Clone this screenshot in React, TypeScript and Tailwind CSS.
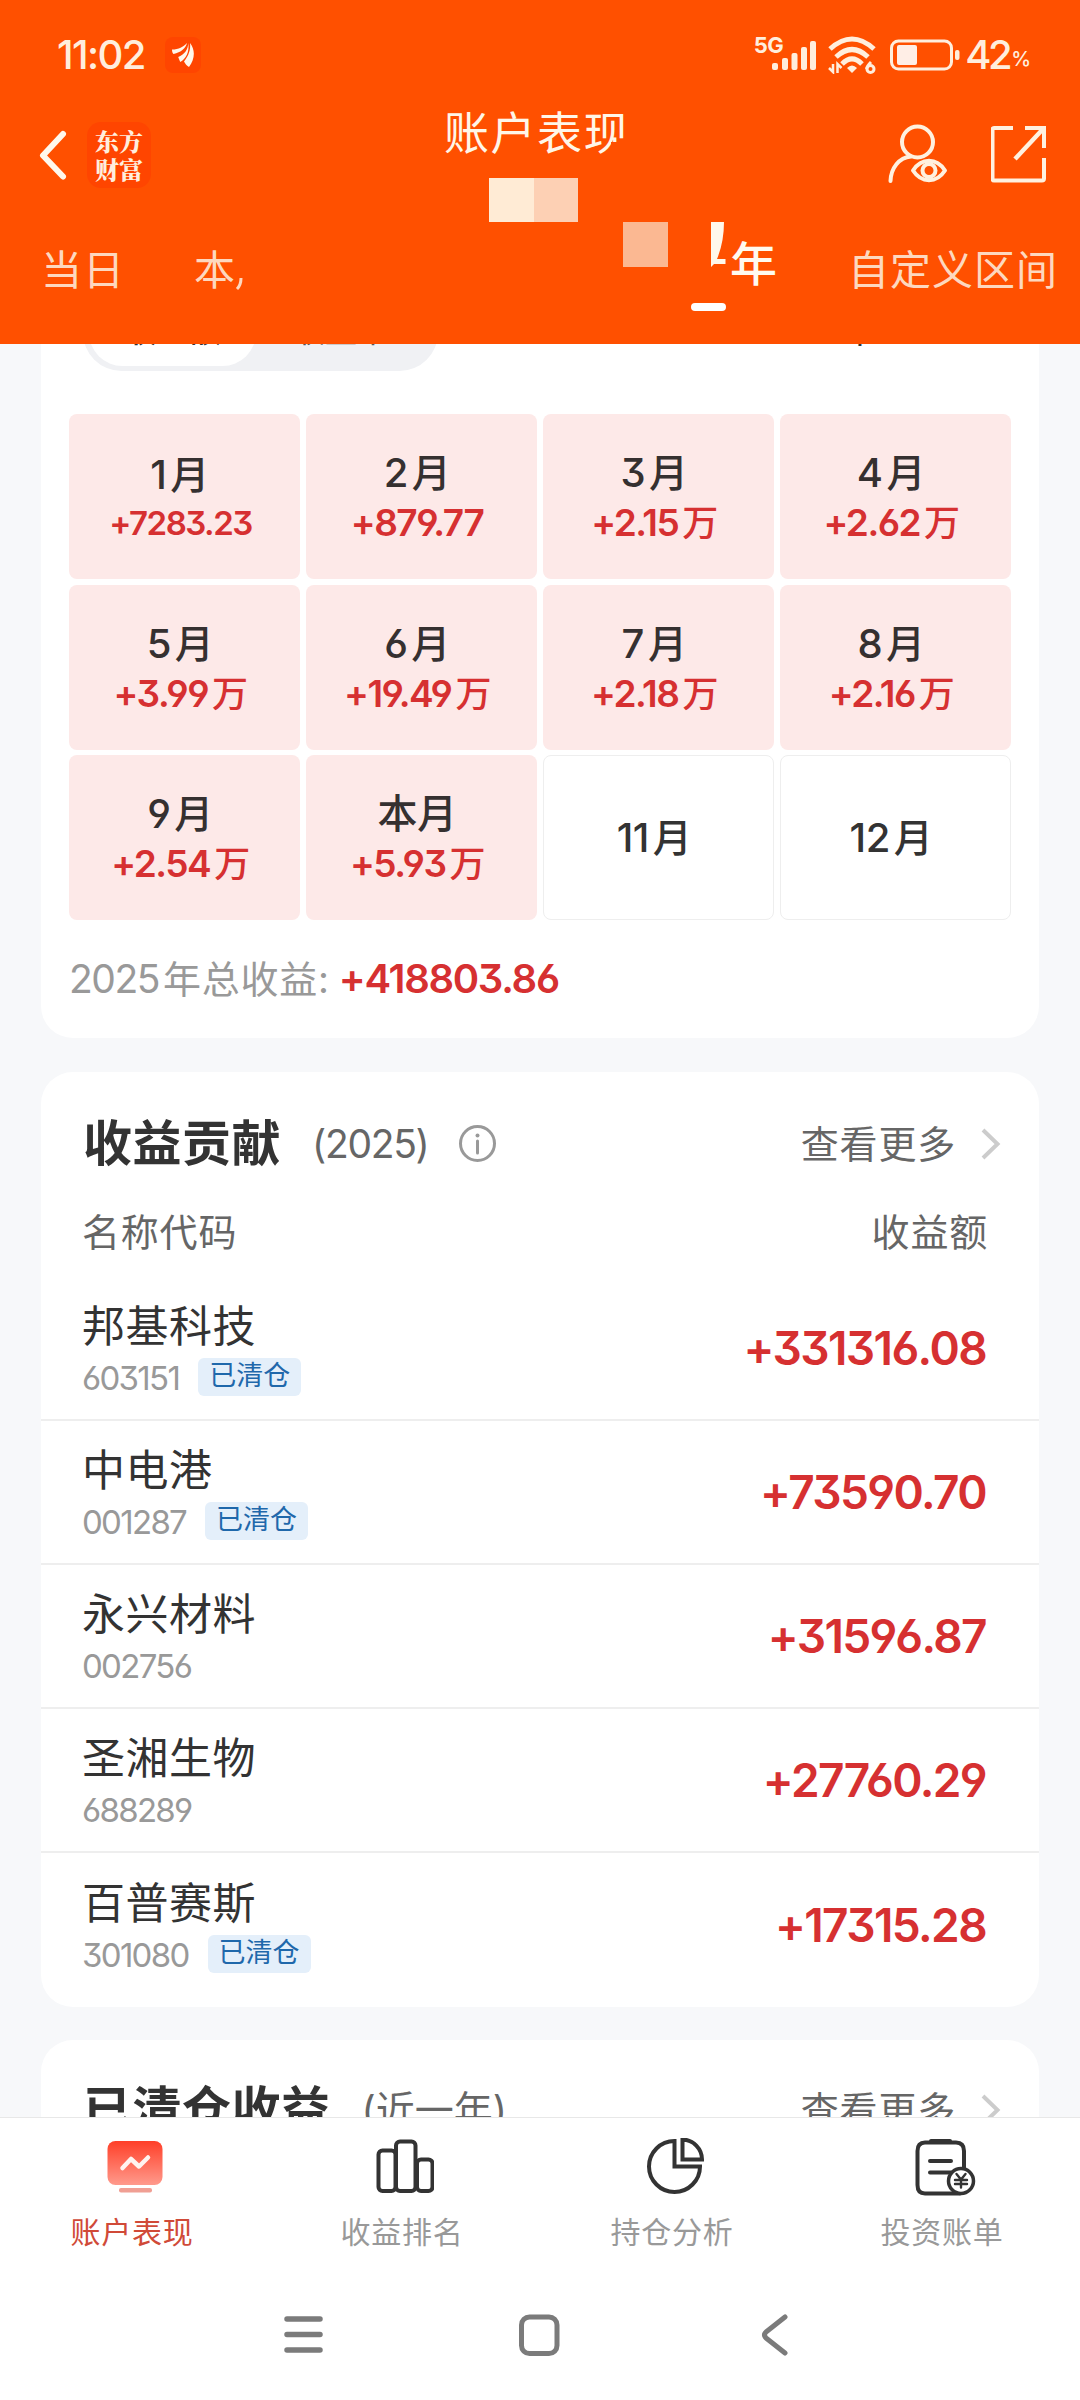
import React from "react";

type Month = { num: string; amount?: string; unit?: string; small?: boolean };

const months: Month[] = [
  { num: "1", amount: "+7283.23", small: true },
  { num: "2", amount: "+879.77" },
  { num: "3", amount: "+2.15", unit: "万" },
  { num: "4", amount: "+2.62", unit: "万" },
  { num: "5", amount: "+3.99", unit: "万" },
  { num: "6", amount: "+19.49", unit: "万" },
  { num: "7", amount: "+2.18", unit: "万" },
  { num: "8", amount: "+2.16", unit: "万" },
  { num: "9", amount: "+2.54", unit: "万" },
  { num: "本", amount: "+5.93", unit: "万" },
  { num: "11" },
  { num: "12" },
];

const stocks = [
  { name: "邦基科技", code: "603151", cleared: true, amount: "+331316.08" },
  { name: "中电港", code: "001287", cleared: true, amount: "+73590.70" },
  { name: "永兴材料", code: "002756", cleared: false, amount: "+31596.87" },
  { name: "圣湘生物", code: "688289", cleared: false, amount: "+27760.29" },
  { name: "百普赛斯", code: "301080", cleared: true, amount: "+17315.28" },
];

function StatusBar() {
  return (
    <div className="flex h-[109px] items-center pl-[57px] pr-[50px] text-[#ffeedd]">
      <span className="text-[40px] font-medium leading-[40px] tracking-[-1.6px]">11:02</span>
      <span className="ml-[20px] flex h-[36px] w-[36px] items-center justify-center rounded-[8px] bg-[#ff4500]">
        <svg width="24" height="26" viewBox="0 0 24 26" fill="#fff8ec">
          <path d="M1 7.500C8 7.500 12 5 16 1c-1 5-6 9.500-13.500 11C1.500 11 1 9.500 1 7.500z" />
          <path d="M17.200 1c0 7-4 11.500-10 14l2 5c5.500-3 9.500-10 8-19z" />
          <path d="M19 1c1 8-2.500 14-6 18.500 1 2 3 4.500 5 5.500 6-8 6.500-17 1-24z" />
        </svg>
      </span>
      <div className="ml-auto flex items-center">
        <span className="mb-[20px] text-[22px] font-bold leading-[20px] tracking-[-0.5px]">5G</span>
        <svg className="-ml-[11px]" width="46" height="36" viewBox="0 0 46 36" fill="#ffeedd">
          <rect x="0" y="26" width="6" height="7" rx="2" />
          <rect x="10" y="21" width="6" height="12" rx="2" />
          <rect x="19.500" y="16" width="6" height="17" rx="2" />
          <rect x="29" y="10" width="6" height="23" rx="2" />
          <rect x="38" y="4" width="6" height="29" rx="2" />
        </svg>
        <svg className="ml-[10px]" width="48" height="38" viewBox="0 0 48 38" fill="none" stroke="#ffeedd">
          <path d="M2 13Q24 -7 46 13" strokeWidth="5" />
          <path d="M8 21Q24 6 40 21" strokeWidth="5" />
          <path d="M14 28Q24 18 34 28" strokeWidth="5" />
          <path d="M19 32Q24 27 29 32L24 37Z" fill="#ffeedd" stroke="none" />
          <path d="M5 28V36L1 32M9.500 37V28L13.500 32" strokeWidth="2.500" />
          <path d="M43 26Q39 30 38.500 33" strokeWidth="3" />
          <circle cx="42.500" cy="33" r="3.500" strokeWidth="3" />
        </svg>
        <svg className="ml-[14px]" width="72" height="32" viewBox="0 0 72 32" fill="none">
          <rect x="1.500" y="2" width="60" height="28" rx="7" stroke="#ffeedd" strokeWidth="3" />
          <rect x="7" y="6" width="20" height="20" rx="2" fill="#ffeee6" />
          <rect x="65" y="11" width="4.500" height="10" rx="2" fill="#ffeedd" />
        </svg>
        <span className="ml-[3px] text-[40px] font-medium leading-[40px] tracking-[-3.500px]">42</span>
        <span className="-mr-[1px] ml-[2px] mt-[9px] text-[20px] font-medium leading-[24px]">%</span>
      </div>
    </div>
  );
}

function Header() {
  return (
    <header className="relative h-[344px] shrink-0 overflow-hidden bg-[#ff5000]">
      <StatusBar />
      <div className="flex h-[92px] items-center pl-[38px] pr-[33px]">
        <svg width="30" height="52" viewBox="0 0 30 52" fill="none" stroke="#fff8ec" strokeWidth="6" strokeLinecap="round" strokeLinejoin="round">
          <path d="M25 5L5 26.500L25 47.500" />
        </svg>
        <div className="ml-[19px] flex h-[66px] w-[64px] flex-col items-center justify-center rounded-[14px] bg-[#ff4500] font-['Noto_Serif_CJK_SC','Noto_Sans_CJK_SC',sans-serif] text-[24px] font-black leading-[28px] text-[#ffeedd]">
          <span>东方</span>
          <span>财富</span>
        </div>
        <h1 className="ml-[293px] self-start pt-[2px] text-[45px] leading-[46px] tracking-[1.500px] text-[#fff6e8]">账户表现</h1>
        <svg className="ml-auto" width="62" height="62" viewBox="0 0 62 62" fill="none" stroke="#fff1df" strokeWidth="4" strokeLinecap="round">
          <circle cx="30.500" cy="18" r="15.500" />
          <path d="M3.500 57C4 44 12 33.500 24 32.500" />
          <path d="M26 46.500C34.500 33.500 49.500 33.500 58 46.500C49.500 59.500 34.500 59.500 26 46.500Z" strokeLinejoin="round" />
          <circle cx="42" cy="46.500" r="6.500" />
        </svg>
        <svg className="ml-[42px]" width="56" height="58" viewBox="0 0 56 58" fill="none" stroke="#fff1df" strokeWidth="4">
          <path d="M22 2H3Q1.500 2 1.500 4V52.500Q1.500 54.500 3 54.500H51Q53 54.500 53 52.500V32" />
          <path d="M34 2H53V22" />
          <path d="M52 3L24 33" strokeWidth="4.500" />
        </svg>
      </div>
      <nav className="flex items-start pt-[49px] text-[41px] leading-[41px] tracking-[1px] text-[#fdd8bf]">
        <span className="ml-[41px]">当日</span>
        <span className="ml-[69px]">本</span>
        <svg className="-ml-[1px] mt-[26px]" width="10" height="16" viewBox="0 0 10 16" fill="none" stroke="#fdd8bf" strokeWidth="3">
          <path d="M6 2Q6 9 2 13" />
        </svg>
        <svg className="-mt-[28px] ml-[466px]" width="16" height="46" viewBox="0 0 16 46" fill="#fff8ec">
          <path d="M0 0H13Q13 20 6 37H14.500V42H3L0 45Z" />
        </svg>
        <span className="-mt-[7px] ml-[3px] text-[47px] font-medium text-[#fffaf0]">年</span>
        <span className="ml-[70px]">自定义区间</span>
      </nav>
      <div className="absolute left-[489px] top-[178px] flex h-[44px] w-[89px]">
        <i className="w-[45px] bg-[#ffebd5]" />
        <i className="flex-1 bg-[#fdd0b4]" />
      </div>
      <i className="absolute left-[623px] top-[222px] h-[45px] w-[45px] bg-[#fbb892]" />
      <i className="absolute left-[611px] top-[142px] h-[18px] w-[24px] bg-[#ff5000]" />
      <i className="absolute left-[691px] top-[303px] h-[8px] w-[35px] rounded-full bg-white" />
    </header>
  );
}

function MonthCell({ num, amount, unit, small }: Month) {
  const label = (
    <span className={small ? "mt-[2px] pr-[10px]" : "pr-[9px]"}>
      {num}
      <span className={num === "本" ? "" : "ml-[4px] text-[39px]"}>月</span>
    </span>
  );
  if (!amount) {
    return (
      <div className="flex items-center justify-center rounded-[8px] border border-[#eeeeee] text-[40px] font-medium leading-[50px] tracking-[-0.500px] text-[#333]">
        {label}
      </div>
    );
  }
  return (
    <div className="flex flex-col items-center rounded-[8px] bg-[#fde9e8] pt-[34px] text-[40px] font-medium leading-[50px] tracking-[-0.500px] text-[#353030]">
      {label}
      <span
        className={
          small
            ? "-mt-[2px] pr-[8px] text-[33px] font-semibold tracking-[-1.500px] text-[#d63031]"
            : "pr-[9px] text-[37px] font-semibold tracking-[-1.500px] text-[#d63031]"
        }
      >
        {amount}
        {unit && <span className="ml-[4px] text-[36px] font-medium">{unit}</span>}
      </span>
    </div>
  );
}

function CardHead({ title, note, info }: { title: string; note: string; info?: boolean }) {
  return (
    <div className="flex h-[70px] items-center pl-[42px] pr-[38px]">
      <h2 className="text-[49px] font-bold leading-[60px] tracking-[0.500px] text-[#333]">{title}</h2>
      <span className={info ? "ml-[31px] text-[39px] leading-[60px] tracking-[-1.300px] text-[#666]" : "ml-[31px] text-[39px] leading-[60px] text-[#666]"}>{note}</span>
      {info && (
        <svg className="ml-[30px]" width="39" height="39" viewBox="0 0 39 39" fill="none" stroke="#999" strokeWidth="3">
          <circle cx="18.500" cy="18.500" r="17" />
          <path d="M18.500 16V28" strokeLinecap="round" />
          <circle cx="18.500" cy="10.500" r="2" fill="#999" stroke="none" />
        </svg>
      )}
      <span className="ml-auto text-[38px] leading-[60px] tracking-[0.800px] text-[#666]">查看更多</span>
      <svg className="ml-[25px]" width="20" height="34" viewBox="0 0 20 34" fill="none" stroke="#ccc" strokeWidth="4">
        <path d="M2 3L16.500 17L2 31" />
      </svg>
    </div>
  );
}

const tabs = [
  {
    label: "账户表现",
    icon: (
      <svg width="56" height="58" viewBox="0 0 56 58" fill="none">
        <defs>
          <linearGradient id="screen" x1="0" y1="0" x2="0" y2="1">
            <stop offset="0" stopColor="#ff3f28" />
            <stop offset="1" stopColor="#ff9a8c" />
          </linearGradient>
        </defs>
        <rect x="0.500" y="3" width="55" height="44" rx="8" fill="url(#screen)" />
        <path d="M15.500 30L24 21L32 28.500L41 19.500" stroke="#fff4f0" strokeWidth="4.500" strokeLinecap="round" strokeLinejoin="round" />
        <rect x="12" y="50" width="33" height="4.500" rx="2" fill="#f09f94" />
      </svg>
    ),
  },
  {
    label: "收益排名",
    icon: (
      <svg width="58" height="58" viewBox="0 0 58 58" fill="none" stroke="#333" strokeWidth="4">
        <rect x="2.500" y="12.500" width="17" height="40.500" rx="4" />
        <rect x="20" y="3.500" width="19.500" height="49.500" rx="4" />
        <rect x="41" y="21.500" width="15.500" height="31.500" rx="4" />
      </svg>
    ),
  },
  {
    label: "持仓分析",
    icon: (
      <svg width="58" height="58" viewBox="0 0 58 58" fill="none" stroke="#333" strokeWidth="4">
        <path d="M28.500 3A25.500 25.500 0 1 0 54 28.500H28.500Z" />
        <path d="M36.500 1.500A20 20 0 0 1 56 21.500H36.500Z" />
      </svg>
    ),
  },
  {
    label: "投资账单",
    icon: (
      <svg width="62" height="60" viewBox="0 0 62 60" fill="none" stroke="#333" strokeWidth="4" strokeLinecap="round">
        <path d="M50 30V13Q50 4.500 42 4.500H11Q3.500 4.500 3.500 13V47Q3.500 55.500 11 55.500H46" />
        <path d="M17 3H36M16 23H37M16 34.500H37" />
        <circle cx="47" cy="43" r="12.500" fill="#fff" strokeWidth="3.500" />
        <path d="M42.500 36L47 41.500L51.500 36M47 41.500V49.500M41 42H53M41 46H53" strokeWidth="2.400" />
      </svg>
    ),
  },
];

export default function App() {
  return (
    <div
      lang="zh-CN"
      className="flex h-[2400px] w-[1080px] flex-col overflow-hidden bg-[#f7f8fa] font-['Inter','Noto_Sans_CJK_SC',sans-serif] [font-feature-settings:'cv03','cv04','cv09'] whitespace-nowrap"
    >
      <Header />

      <main className="flex h-[1773px] shrink-0 flex-col overflow-hidden px-[41px]">
        <section className="-mt-[50px] h-[744px] shrink-0 rounded-b-[32px] bg-white px-[28px]">
          <div className="flex h-[77px] items-center justify-between">
            <div className="ml-[14px] flex h-[77px] w-[355px] items-center rounded-full bg-[#f0f1f4] px-[6px] text-[32px] leading-[63px]">
              <span className="h-[67px] w-[167px] rounded-full bg-white text-center font-medium text-[#333]">收益额</span>
              <span className="h-[67px] flex-1 pr-[6px] text-center text-[#555]">收益率</span>
            </div>
            <span className="mb-[10px] mr-[134px] text-[38px] leading-[50px] text-[#333]">2025年</span>
          </div>
          <div className="mt-[43px] grid h-[506px] grid-cols-4 grid-rows-3 gap-x-[6px] gap-y-[5.500px]">
            {months.map((m) => (
              <MonthCell key={m.num} {...m} />
            ))}
          </div>
          <div className="mt-[29px] flex items-center leading-[60px]">
            <span className="text-[39px] tracking-[-1.500px] text-[#999]">2025</span>
            <span className="ml-[4px] text-[38px] tracking-[0.800px] text-[#999]">年总收益:</span>
            <span className="ml-[9px] text-[40px] font-semibold tracking-[-1.300px] text-[#d63031]">+418803.86</span>
          </div>
        </section>

        <section className="mt-[34px] h-[935px] shrink-0 rounded-[32px] bg-white pt-[37px]">
          <CardHead title="收益贡献" note="(2025)" info />
          <div className="flex h-[98px] items-start justify-between pl-[41px] pr-[51px] pt-[33px] text-[38px] leading-[40px] tracking-[0.800px] text-[#666]">
            <span>名称代码</span>
            <span>收益额</span>
          </div>
          <ul>
            {stocks.map((s) => (
              <li key={s.code} className="flex h-[144px] items-center justify-between border-b-2 border-[#eeeeee] pl-[41px] pr-[53px] last:border-b-0">
                <div className="flex flex-col pt-[6px]">
                  <span className="text-[43px] leading-[52px] tracking-[0.500px] text-[#333]">{s.name}</span>
                  <div className="flex h-[51px] items-center">
                    <span className="pt-[1px] text-[33px] leading-[38px] tracking-[-1.700px] text-[#999]">{s.code}</span>
                    {s.cleared && (
                      <span className="ml-[19px] h-[38px] rounded-[6px] bg-[#e4effa] px-[11px] text-[27px] leading-[36px] text-[#1f68ab]">已清仓</span>
                    )}
                  </div>
                </div>
                <span className="text-[46px] font-semibold leading-[56px] tracking-[-1.600px] text-[#d63031]">{s.amount}</span>
              </li>
            ))}
          </ul>
        </section>

        <section className="mt-[33px] h-[300px] shrink-0 rounded-t-[32px] bg-white pt-[35px]">
          <CardHead title="已清仓收益" note="(近一年)" />
        </section>
      </main>

      <footer className="flex flex-1 flex-col border-t border-[#e8e8e8] bg-white">
        <div className="grid h-[151px] grid-cols-4 pt-[20px]">
          {tabs.map((t, i) => (
            <div key={t.label} className="flex flex-col items-center">
              <div className="flex h-[60px] items-start">{t.icon}</div>
              <span
                className={
                  i === 0
                    ? "mr-[6px] mt-[14px] text-[30px] leading-[40px] tracking-[0.800px] text-[#d04a38]"
                    : "mr-[6px] mt-[14px] text-[30px] leading-[40px] tracking-[0.800px] text-[#999]"
                }
              >
                {t.label}
              </span>
            </div>
          ))}
        </div>
        <div className="flex h-[132px] items-center pl-[282px] text-[#7b7b7b]">
          <svg width="42" height="42" viewBox="0 0 42 42" stroke="currentColor" strokeWidth="5.500" strokeLinecap="round">
            <path d="M5 5H38M5 20.500H38M5 36H38" />
          </svg>
          <svg className="ml-[194px]" width="42" height="42" viewBox="0 0 42 42" fill="none" stroke="currentColor" strokeWidth="5">
            <rect x="3.500" y="3" width="35.500" height="36.500" rx="8" />
          </svg>
          <svg className="ml-[200px]" width="30" height="44" viewBox="0 0 30 44" fill="none" stroke="currentColor" strokeWidth="5" strokeLinecap="round" strokeLinejoin="round">
            <path d="M25 4L6 19Q3 22 6 25L25 40" />
          </svg>
        </div>
      </footer>
    </div>
  );
}
